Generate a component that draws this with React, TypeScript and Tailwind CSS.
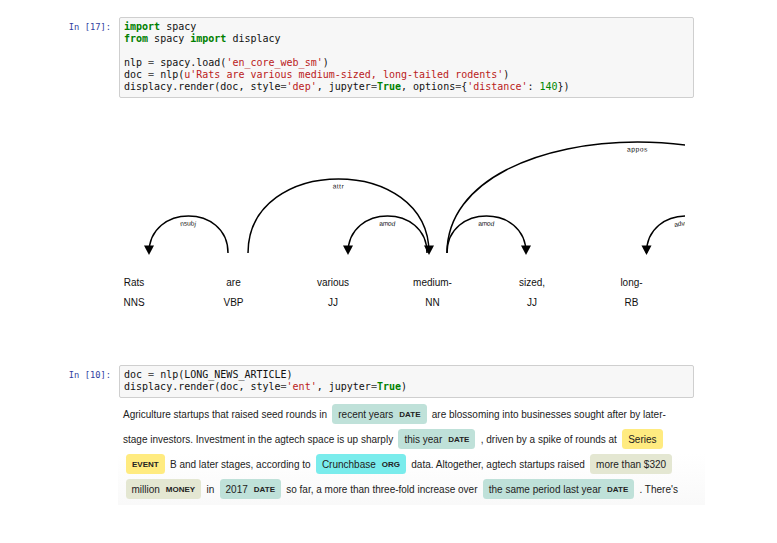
import React from 'react';

const MONO = { fontFamily: '"DejaVu Sans Mono", "Liberation Mono", monospace' };
const SANS = { fontFamily: '"Liberation Sans", Arial, sans-serif' };

const K = ({ children }: { children: React.ReactNode }) => <span className="font-bold text-[#008000]">{children}</span>;
const S = ({ children }: { children: React.ReactNode }) => <span className="text-[#ba2121]">{children}</span>;
const N = ({ children }: { children: React.ReactNode }) => <span className="text-[#008800]">{children}</span>;
const O = ({ children }: { children: React.ReactNode }) => <span className="text-[#555]">{children}</span>;

function Cell({ n, children }: { n: number; children: React.ReactNode }) {
  return (
    <div className="flex">
      <div className="w-[119px] shrink-0 pr-[8px] pt-[4px] text-right text-[8.75px] leading-[12px] text-[#303f9f]" style={MONO}>
        In [{n}]:
      </div>
      <pre
        className="w-[575px] rounded-[2px] border border-[#cfcfcf] bg-[#f7f7f7] pl-[4px] pt-[3px] pb-[4px] text-[10px] leading-[12px] text-[#111] whitespace-pre"
        style={MONO}
      >
        {children}
      </pre>
    </div>
  );
}

// only the words that fall inside the visible part of the diagram
const words = [
  ['Rats', 'NNS'],
  ['are', 'VBP'],
  ['various', 'JJ'],
  ['medium-', 'NN'],
  ['sized,', 'JJ'],
  ['long-', 'RB'],
];

const arcs = [
  { l: 149, r: 228, yc: 203.7, label: 'nsubj', dir: 'left' },
  { l: 248, r: 429, yc: 154.3, label: 'attr', dir: 'right' },
  { l: 348, r: 427, yc: 203.7, label: 'amod', dir: 'left' },
  { l: 447, r: 526, yc: 203.7, label: 'amod', dir: 'right' },
  { l: 447, r: 828, yc: 105, label: 'appos', dir: 'right' },
  { l: 646.5, r: 725.5, yc: 203.7, label: 'advmod', dir: 'left' },
];

function DepTree() {
  const y = 253;
  return (
    <div className="ml-[118px] h-[267px] w-[567px] overflow-hidden">
      <svg width={567} height={267} viewBox="118 98 567 267" style={SANS}>
        {words.map(([w, t], i) => {
          const x = 134 + 99.5 * i;
          return (
            <g key={i}>
              <text x={x} y={285.5} textAnchor="middle" fontSize={10} fill="#111">{w}</text>
              <text x={x} y={305.5} textAnchor="middle" fontSize={10} fill="#111">{t}</text>
            </g>
          );
        })}
        {arcs.map((a, i) => {
          const tip = a.dir === 'left' ? a.l : a.r;
          return (
            <g key={i}>
              <path
                id={`arc-${i}`}
                d={`M${a.l},${y} C${a.l},${a.yc} ${a.r},${a.yc} ${a.r},${y}`}
                fill="none"
                stroke="#000"
                strokeWidth={1.5}
              />
              <text dy="9.5" fontSize={6.75} letterSpacing={0.6} fill="#222">
                <textPath href={`#arc-${i}`} startOffset="50%" textAnchor="middle">
                  {a.label}
                </textPath>
              </text>
              <path d={`M${tip},255 L${tip - 5},245.5 ${tip + 5},245.5`} fill="#000" />
            </g>
          );
        })}
      </svg>
    </div>
  );
}

const Lbl = ({ children }: { children: React.ReactNode }) => (
  <span className="ml-[6px] align-middle text-[8px] font-bold uppercase leading-none text-[#222]">{children}</span>
);

function Ent({ text, label, bg }: { text: string; label: string; bg: string }) {
  return (
    <span className={`mx-[2.5px] rounded-[3.5px] px-[6px] py-[4.5px] leading-none ${bg}`}>
      {text}
      <Lbl>{label}</Lbl>
    </span>
  );
}

function EntOutput() {
  return (
    <div className="mt-[3.5px] ml-[118px] w-[587px] bg-gradient-to-b from-white via-white to-[#f9f9f9] pl-[5px] pb-[3px] text-[10px] text-[#222]" style={SANS}>
      <div className="leading-[25px] whitespace-nowrap">
        Agriculture startups that raised seed rounds in <Ent text="recent years" label="DATE" bg="bg-[#bfe1d9]" /> are blossoming into businesses sought after by later-
      </div>
      <div className="leading-[25px] whitespace-nowrap">
        stage investors. Investment in the agtech space is up sharply <Ent text="this year" label="DATE" bg="bg-[#bfe1d9]" /> , driven by a spike of rounds at{' '}
        <span className="mx-[2.5px] rounded-[3.5px] bg-[#ffeb80] px-[6px] py-[4.5px] leading-none">Series</span>
      </div>
      <div className="leading-[25px] whitespace-nowrap">
        <span className="mx-[2.5px] rounded-[3.5px] bg-[#ffeb80] py-[4.5px] pl-[0.5px] pr-[6px] leading-none">
          <Lbl>EVENT</Lbl>
        </span>{' '}
        B and later stages, according to <Ent text="Crunchbase" label="ORG" bg="bg-[#7aecec]" /> data. Altogether, agtech startups raised{' '}
        <span className="mx-[2.5px] rounded-[3.5px] bg-[#e4e7d2] px-[6px] py-[4.5px] leading-none">more than $320</span>
      </div>
      <div className="leading-[25px] whitespace-nowrap">
        <Ent text="million" label="MONEY" bg="bg-[#e4e7d2]" /> in <Ent text="2017" label="DATE" bg="bg-[#bfe1d9]" /> so far, a more than three-fold increase over{' '}
        <Ent text="the same period last year" label="DATE" bg="bg-[#bfe1d9]" /> . There's
      </div>
    </div>
  );
}

export default function App() {
  return (
    <div className="relative h-[543px] w-[777px] overflow-hidden bg-white pt-[17px]">
      <Cell n={17}>
        <K>import</K> spacy{'\n'}
        <K>from</K> spacy <K>import</K> displacy{'\n'}
        {'\n'}
        nlp <O>=</O> spacy.load(<S>'en_core_web_sm'</S>){'\n'}
        doc <O>=</O> nlp(<S>u'Rats are various medium-sized, long-tailed rodents'</S>){'\n'}
        displacy.render(doc, style<O>=</O><S>'dep'</S>, jupyter<O>=</O><K>True</K>, options<O>=</O>{'{'}
        <S>'distance'</S>: <N>140</N>{'})'}
      </Cell>
      <DepTree />
      <Cell n={10}>
        doc <O>=</O> nlp(LONG_NEWS_ARTICLE){'\n'}
        displacy.render(doc, style<O>=</O><S>'ent'</S>, jupyter<O>=</O><K>True</K>)
      </Cell>
      <EntOutput />
    </div>
  );
}
